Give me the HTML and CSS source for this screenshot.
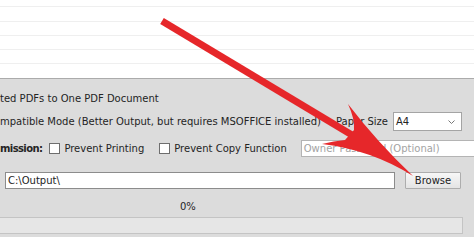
FILE: index.html
```html
<!DOCTYPE html>
<html>
<head>
<meta charset="utf-8">
<link rel="stylesheet" href="styles.css">
</head>
<body>
<div class="page">
  <div class="list">
    <div class="line first"></div>
    <div class="line"></div>
    <div class="line"></div>
    <div class="line"></div>
    <div class="line"></div>
  </div>
  <div class="panel">
    <div class="row r1"><span>ted PDFs to One PDF Document</span></div>
    <div class="row r2">
      <span>mpatible Mode (Better Output, but requires MSOFFICE installed)</span>
      <span class="size-lbl">Paper Size</span>
      <div class="select"><span>A4</span>
        <svg class="chev" width="7" height="4" viewBox="0 0 7 4"><path d="M0.5 0.5 L3.5 3.5 L6.5 0.5" fill="none" stroke="#777" stroke-width="1"/></svg>
      </div>
    </div>
    <div class="row r3">
      <b class="perm">mission:</b>
      <label class="chk c1"><span class="box"></span>Prevent Printing</label>
      <label class="chk c2"><span class="box"></span>Prevent Copy Function</label>
      <div class="field owner">Owner Password (Optional)</div>
    </div>
    <div class="row r4">
      <div class="field path">C:\Output\</div>
      <button class="browse">Browse</button>
    </div>
    <div class="pct">0%</div>
    <div class="progress"></div>
  </div>
  <svg class="arrow" width="474" height="237" viewBox="0 0 474 237">
    <line x1="162" y1="21" x2="352" y2="135" stroke="#e6272a" stroke-width="7"/>
    <path d="M413 176 Q377 142 348 104 Q355 119 354 130 L345 140 Q334 141 322 144 Q372 150 413 176 Z" fill="#e6272a"/>
  </svg>
</div>
</body>
</html>
```

FILE: styles.css
```css
* { box-sizing: border-box; }
html, body { margin: 0; padding: 0; }
body {
  width: 474px;
  height: 237px;
  overflow: hidden;
  font-family: "DejaVu Sans", Verdana, sans-serif;
  font-size: 10px;
  color: #242424;
  background: #dcdcdc;
}
.page {
  position: relative;
  width: 474px;
  height: 237px;
  overflow: hidden;
}
.list {
  height: 78px;
  padding-top: 6px;
  background: #ffffff;
}
.line {
  height: 14px;
  border-top: 1px solid #efefef;
}
.line.first {
  height: 15px;
}
.panel {
  height: 159px;
  border-top: 1px solid #ababab;
  background: #dcdcdc;
  display: flex;
  flex-direction: column;
}
.row {
  display: flex;
  align-items: center;
  white-space: nowrap;
}
.r1 {
  margin-top: 12px;
  height: 14px;
}
.r2 {
  margin-top: 7px;
  height: 19px;
}
.size-lbl {
  margin-left: 15px;
}
.select {
  margin-left: 5px;
  width: 69px;
  height: 19px;
  background: #fff;
  border: 1px solid #a4a4a4;
  display: flex;
  align-items: center;
  justify-content: space-between;
  padding: 0 6px 0 2px;
}
.r3 {
  margin-top: 9px;
  height: 17px;
}
.perm {
  margin-left: 0;
  letter-spacing: -0.6px;
  font-weight: bold;
}
.chk {
  display: flex;
  align-items: center;
}
.box {
  width: 11px;
  height: 11px;
  background: #fff;
  border: 1px solid #6e6e6e;
  margin-right: 4px;
}
.c1 { margin-left: 7px; }
.c2 { margin-left: 15px; }
.field {
  height: 17px;
  background: #fff;
  border: 1px solid #a0a0a0;
  display: flex;
  align-items: center;
  padding-left: 2px;
}
.owner {
  margin-left: 14px;
  width: 190px;
  flex: none;
  color: #a3a3a3;
  border-color: #b4b4b4;
}
.r4 {
  margin-top: 15px;
  height: 17px;
  padding-left: 5px;
}
.path {
  width: 390px;
  height: 17px;
  border-color: #8c8c8c;
}
.browse {
  margin-left: 10px;
  width: 56px;
  height: 17px;
  padding: 0;
  font-family: inherit;
  font-size: 10px;
  color: #222;
  border: 1px solid #adadad;
  border-radius: 1px;
  background: linear-gradient(#f7f7f7, #e4e4e4);
}
.pct {
  margin-top: 11px;
  height: 14px;
  line-height: 14px;
  padding-left: 180px;
}
.progress {
  margin-top: 3px;
  width: 463px;
  height: 17px;
  background: #e6e6e6;
  border: 1px solid #c4c4c4;
  border-left: none;
}
.arrow {
  position: absolute;
  left: 0;
  top: 0;
  pointer-events: none;
}
```
